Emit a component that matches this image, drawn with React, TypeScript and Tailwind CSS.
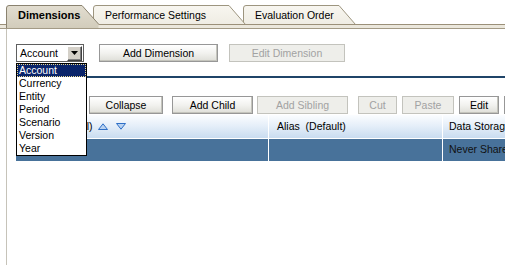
import React from "react";

const Btn = ({ label, w, ml, disabled }: { label: string; w: string; ml: string; disabled?: boolean }) => (
  <div
    className={`${w} ${ml} flex-none h-[18px] flex items-center justify-center border leading-none ${
      disabled
        ? "border-[#c3c3bd] bg-[#eeeeea] text-[#a2a2a2]"
        : "border-[#979797] bg-[linear-gradient(#ffffff,#f2f2ef_50%,#dedeD8)] text-black shadow-[inset_-1px_-1px_0_#c4c4bc]"
    }`}
  >
    {label}
  </div>
);

const Tab = ({
  label,
  width,
  top,
  active,
  z,
  ml,
}: {
  label: string;
  width: number;
  top: number;
  active?: boolean;
  z: string;
  ml: string;
}) => {
  const h = active ? 23 : 19;
  const d = active
    ? `M0.5,${h} V3 Q0.5,0.5 3,0.5 H${top} L${width - 0.5},19 V${h} Z`
    : `M0.5,19.5 V3 Q0.5,0.5 3,0.5 H${top} L${width - 0.5},19.5 Z`;
  const stroke = active
    ? `M0.5,${h} V3 Q0.5,0.5 3,0.5 H${top} L${width - 0.5},19`
    : `M0.5,19.5 V3 Q0.5,0.5 3,0.5 H${top} L${width - 0.5},19.5`;
  return (
    <div className={`relative ${z} ${ml} flex-none h-[19px]`} style={{ width }}>
      <svg className="absolute left-0 top-0" width={width} height={h} viewBox={`0 0 ${width} ${h}`}>
        <defs>
          <linearGradient id={`g${label.length}`} x1="0" y1="0" x2="0" y2="1">
            <stop offset="0" stopColor={active ? "#e2ddd0" : "#f8f6f0"} />
            <stop offset="1" stopColor={active ? "#d2ccbb" : "#efece3"} />
          </linearGradient>
        </defs>
        <path d={d} fill={`url(#g${label.length})`} />
        <path d={stroke} fill="none" stroke={active ? "#8a826f" : "#9d957f"} strokeWidth="1" strokeDasharray={undefined} />
      </svg>
      <div
        className={`relative pl-[12px] pt-[4px] leading-[12px] text-black ${
          active ? "font-bold text-[11px]" : "text-[10.5px]"
        } whitespace-nowrap`}
      >
        {label}
      </div>
    </div>
  );
};

export default function App() {
  const items = ["Account", "Currency", "Entity", "Period", "Scenario", "Version", "Year"];
  return (
    <div className="relative w-[505px] h-[280px] overflow-hidden bg-white text-[10.5px] text-black font-['Liberation_Sans',Arial,sans-serif]">
      {/* tab strip */}
      <div className="relative z-10 h-[24px] flex items-end pl-[6px]">
        <Tab label="Dimensions" width={93} top={76} active z="z-30" ml="ml-0" />
        <Tab label="Performance Settings" width={153} top={136} z="z-20" ml="-ml-[6px]" />
        <Tab label="Evaluation Order" width={113} top={96} z="z-10" ml="-ml-[3px]" />
      </div>
      <div className="h-[5px] border-t border-b border-t-[#9b9079] border-b-[#a39a85] bg-[#ebe7dc]" />

      {/* content */}
      <div className="ml-[6px] h-[236px] border-l border-[#c6c3b9] pl-[9px] flex flex-col">
        <div className="mt-[15px] flex items-start">
          <div className="flex-none w-[68px] h-[18px] border border-[#5f5f5f] bg-white flex items-center">
            <span className="pl-[3px] flex-1 leading-none">Account</span>
            <div className="w-[15px] h-[15px] mr-[1px] bg-[#d4d0c8] border border-t-white border-l-white border-r-[#404040] border-b-[#404040] shadow-[inset_-1px_-1px_0_#808080] flex items-center justify-center">
              <svg width="7" height="4" viewBox="0 0 7 4">
                <path d="M0,0 H7 L3.5,4 Z" fill="#000" />
              </svg>
            </div>
          </div>
          <Btn label="Add Dimension" w="w-[119px]" ml="ml-[15px]" />
          <Btn label="Edit Dimension" w="w-[116px]" ml="ml-[11px]" disabled />
        </div>

        <div className="mt-[14px] h-[2px] bg-[#1f4468]" />

        <div className="mt-[18px] flex items-start">
          <Btn label="Expand" w="w-[68px]" ml="ml-[1px]" />
          <Btn label="Collapse" w="w-[74px]" ml="ml-[4px]" />
          <Btn label="Add Child" w="w-[81px]" ml="ml-[9px]" />
          <Btn label="Add Sibling" w="w-[91px]" ml="ml-[4px]" disabled />
          <Btn label="Cut" w="w-[39px]" ml="ml-[10px]" disabled />
          <Btn label="Paste" w="w-[52px]" ml="ml-[5px]" disabled />
          <Btn label="Edit" w="w-[40px]" ml="ml-[5px]" />
          <Btn label="Delete" w="w-[60px]" ml="ml-[5px]" />
        </div>

        {/* table */}
        <div className="mt-[1px] flex flex-col">
          <div className="h-[23px] flex bg-[linear-gradient(#fbfdff,#e6eff9_45%,#c9dcf0)]">
            <div className="flex-none w-[253px] border-r border-white flex items-center pl-[6px]">
              <span className="whitespace-nowrap">Member (Total)</span>
              <svg className="ml-[5px]" width="10" height="7" viewBox="0 0 10 7">
                <path d="M0.5,6.5 L5,0.8 L9.5,6.5 Z" fill="#b9d2f0" stroke="#2e6fc7" strokeWidth="1" />
              </svg>
              <svg className="ml-[8px]" width="10" height="7" viewBox="0 0 10 7">
                <path d="M0.5,0.5 L9.5,0.5 L5,6.2 Z" fill="#b9d2f0" stroke="#2e6fc7" strokeWidth="1" />
              </svg>
            </div>
            <div className="flex-none w-[174px] border-r border-white flex items-center pl-[8px] whitespace-pre">
              Alias  (Default)
            </div>
            <div className="flex-1 flex items-center pl-[6px] whitespace-nowrap">Data Storage</div>
          </div>
          <div className="h-[23px] flex bg-[#48729a] border-t border-white">
            <div className="flex-none w-[253px] border-r border-white" />
            <div className="flex-none w-[174px] border-r border-white" />
            <div className="flex-1 flex items-center pl-[6px] whitespace-nowrap text-[#111]">Never Shared</div>
          </div>
        </div>
      </div>

      {/* open dropdown list */}
      <div className="absolute left-[16px] top-[63px] z-40 w-[71px] border border-black bg-white">
        {items.map((it, i) => (
          <div
            key={it}
            className={`h-[13px] leading-[13px] pl-[2px] whitespace-nowrap ${
              i === 0 ? "bg-[#0a246a] text-white outline-1 outline-dotted outline-[#e8d890] -outline-offset-1" : ""
            }`}
          >
            {it}
          </div>
        ))}
      </div>
    </div>
  );
}
